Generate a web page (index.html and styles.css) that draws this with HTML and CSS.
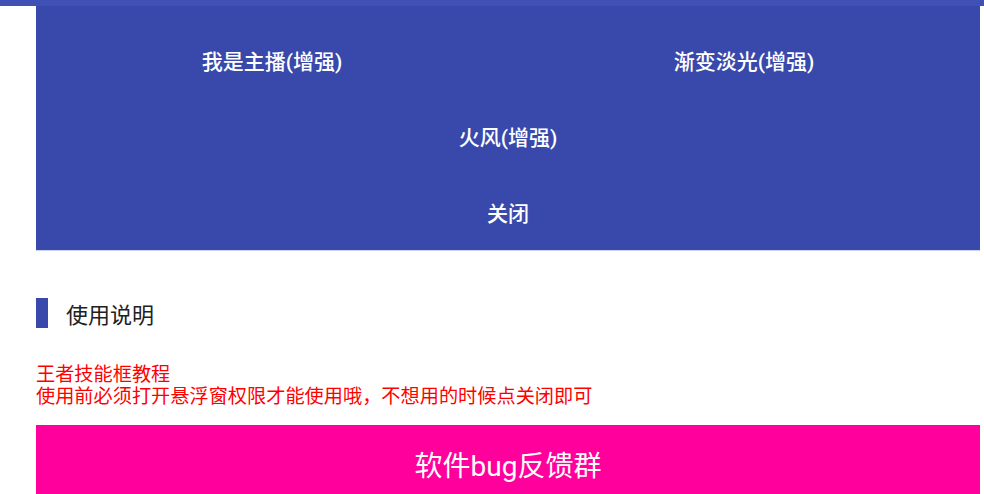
FILE: index.html
```html
<!DOCTYPE html>
<html lang="zh-CN">
<head>
<meta charset="utf-8">
<title>王者技能框</title>
<link rel="stylesheet" href="styles.css">
</head>
<body>
<div class="topbar"></div>
<div class="page">
  <div class="panel">
    <div class="row two">
      <div class="btn">我是主播(增强)</div>
      <div class="btn">渐变淡光(增强)</div>
    </div>
    <div class="row">
      <div class="btn">火风(增强)</div>
    </div>
    <div class="row">
      <div class="btn">关闭</div>
    </div>
  </div>
  <div class="section-title">
    <span class="marker"></span>
    <span class="title-text">使用说明</span>
  </div>
  <div class="notes">
    <p>王者技能框教程</p>
    <p>使用前必须打开悬浮窗权限才能使用哦，不想用的时候点关闭即可</p>
  </div>
  <div class="feedback">软件bug反馈群</div>
</div>
</body>
</html>
```

FILE: styles.css
```css
html, body {
  margin: 0;
  padding: 0;
  background: #ffffff;
  overflow: hidden;
}
body {
  font-family: Roboto, "Noto Sans CJK SC", "Noto Sans", sans-serif;
  width: 984px;
  height: 494px;
}
.topbar {
  height: 6px;
  background: #3f51b5;
}
.page {
  margin: 0 4px 0 36px;
}
.panel {
  background: #3949ab;
  padding-top: 16px;
  box-shadow: 0 1px 0 #cdd3ee;
}
.row {
  display: grid;
  grid-template-columns: 1fr;
  height: 76px;
}
.row.two {
  grid-template-columns: 1fr 1fr;
}
.btn {
  display: flex;
  align-items: center;
  justify-content: center;
  color: #ffffff;
  font-size: 21px;
  font-weight: 500;
}
.section-title {
  display: flex;
  align-items: center;
  gap: 18px;
  margin-top: 48px;
  height: 30px;
}
.marker {
  width: 12px;
  height: 30px;
  background: #3949ab;
}
.title-text {
  font-size: 22px;
  color: #212121;
}
.notes {
  margin-top: 36px;
  color: #ff0000;
  font-size: 19.2px;
  line-height: 22px;
}
.notes p {
  margin: 0;
}
.feedback {
  margin-top: 17px;
  height: 78px;
  background: #ff009c;
  color: #ffffff;
  font-size: 28px;
  display: flex;
  align-items: center;
  justify-content: center;
}
```
